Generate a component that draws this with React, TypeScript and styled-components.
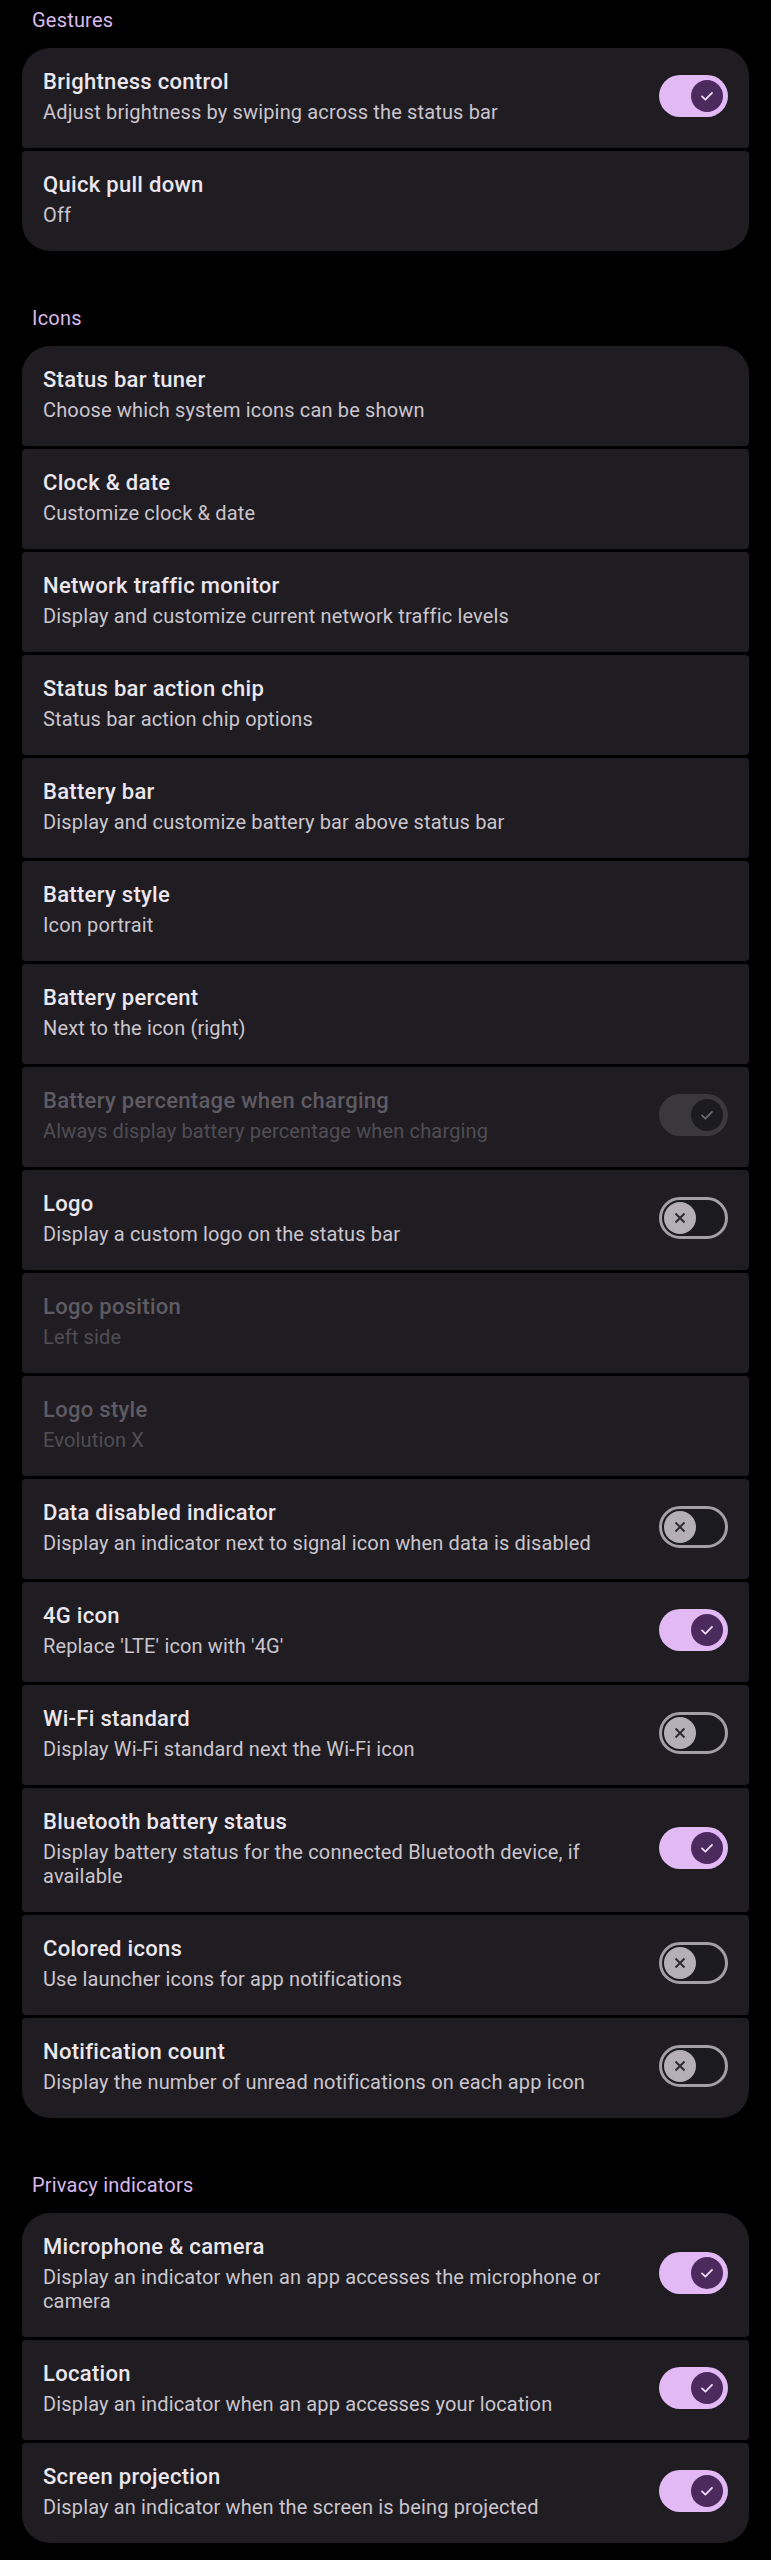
import React from "react";
import styled, { createGlobalStyle } from "styled-components";

type Toggle = "on" | "off" | "disabled" | undefined;

type Pref = {
    title: string;
    summary: string;
    toggle?: Toggle;
    disabled?: boolean;
};

type Section = {
    header: string;
    items: Pref[];
};

const sections: Section[] = [
    {
        header: "Gestures",
        items: [
            { title: "Brightness control", summary: "Adjust brightness by swiping across the status bar", toggle: "on" },
            { title: "Quick pull down", summary: "Off" },
        ],
    },
    {
        header: "Icons",
        items: [
            { title: "Status bar tuner", summary: "Choose which system icons can be shown" },
            { title: "Clock & date", summary: "Customize clock & date" },
            { title: "Network traffic monitor", summary: "Display and customize current network traffic levels" },
            { title: "Status bar action chip", summary: "Status bar action chip options" },
            { title: "Battery bar", summary: "Display and customize battery bar above status bar" },
            { title: "Battery style", summary: "Icon portrait" },
            { title: "Battery percent", summary: "Next to the icon (right)" },
            {
                title: "Battery percentage when charging",
                summary: "Always display battery percentage when charging",
                toggle: "disabled",
                disabled: true,
            },
            { title: "Logo", summary: "Display a custom logo on the status bar", toggle: "off" },
            { title: "Logo position", summary: "Left side", disabled: true },
            { title: "Logo style", summary: "Evolution X", disabled: true },
            {
                title: "Data disabled indicator",
                summary: "Display an indicator next to signal icon when data is disabled",
                toggle: "off",
            },
            { title: "4G icon", summary: "Replace 'LTE' icon with '4G'", toggle: "on" },
            { title: "Wi-Fi standard", summary: "Display Wi-Fi standard next the Wi-Fi icon", toggle: "off" },
            {
                title: "Bluetooth battery status",
                summary: "Display battery status for the connected Bluetooth device, if available",
                toggle: "on",
            },
            { title: "Colored icons", summary: "Use launcher icons for app notifications", toggle: "off" },
            {
                title: "Notification count",
                summary: "Display the number of unread notifications on each app icon",
                toggle: "off",
            },
        ],
    },
    {
        header: "Privacy indicators",
        items: [
            {
                title: "Microphone & camera",
                summary: "Display an indicator when an app accesses the microphone or camera",
                toggle: "on",
            },
            { title: "Location", summary: "Display an indicator when an app accesses your location", toggle: "on" },
            {
                title: "Screen projection",
                summary: "Display an indicator when the screen is being projected",
                toggle: "on",
            },
        ],
    },
];

function Switch({ state }: { state: Toggle }) {
    if (state === "off") {
        return (
            <Track $state="off">
                <Thumb $state="off">
                    <svg width="16" height="16" viewBox="0 0 16 16">
                        <path d="M3.5 3.5 L12.5 12.5 M12.5 3.5 L3.5 12.5" stroke="#29262c" strokeWidth="1.8" fill="none" />
                    </svg>
                </Thumb>
            </Track>
        );
    }
    return (
        <Track $state={state}>
            <Thumb $state={state}>
                <svg width="16" height="16" viewBox="0 0 16 16">
                    <path
                        d="M3 8.4 L6.4 11.6 L13 4.8"
                        stroke={state === "disabled" ? "#6c6870" : "#efdcf7"}
                        strokeWidth="1.8"
                        fill="none"
                        strokeLinecap="round"
                        strokeLinejoin="round"
                    />
                </svg>
            </Thumb>
        </Track>
    );
}

export default function App() {
    return (
        <Page>
            <GlobalStyle />
            {sections.map((section) => (
                <SectionBlock key={section.header}>
                    <Header>{section.header}</Header>
                    <Group>
                        {section.items.map((item) => (
                            <Row key={item.title}>
                                <Texts>
                                    <Title $disabled={item.disabled}>{item.title}</Title>
                                    <Summary $disabled={item.disabled}>{item.summary}</Summary>
                                </Texts>
                                {item.toggle && <Switch state={item.toggle} />}
                            </Row>
                        ))}
                    </Group>
                </SectionBlock>
            ))}
        </Page>
    );
}

const GlobalStyle = createGlobalStyle`
    html, body {
        margin: 0;
        padding: 0;
        background: #000;
    }
    * {
        box-sizing: border-box;
    }
`;

const Page = styled.div`
    width: 771px;
    min-height: 2560px;
    background: #000;
    padding: 8px 22px 20px;
    display: flex;
    flex-direction: column;
    gap: 55px;
    font-family: Roboto, "Noto Sans", sans-serif;
`;

const SectionBlock = styled.section`
    display: flex;
    flex-direction: column;
    gap: 16px;
`;

const Header = styled.div`
    padding-left: 10px;
    height: 24px;
    line-height: 24px;
    font-size: 20px;
    letter-spacing: 0.2px;
    color: #d9baee;
`;

const Group = styled.div`
    display: flex;
    flex-direction: column;
    gap: 3px;
`;

const Row = styled.div`
    display: flex;
    align-items: center;
    gap: 16px;
    min-height: 100px;
    padding: 20px 21px 24px;
    background: #1f1d22;
    border-radius: 4px;

    &:first-child {
        border-top-left-radius: 28px;
        border-top-right-radius: 28px;
    }
    &:last-child {
        border-bottom-left-radius: 28px;
        border-bottom-right-radius: 28px;
    }
`;

const Texts = styled.div`
    flex: 1;
    display: flex;
    flex-direction: column;
    gap: 4px;
`;

const Title = styled.div<{ $disabled?: boolean }>`
    font-size: 22px;
    line-height: 28px;
    font-weight: 500;
    letter-spacing: 0.3px;
    color: ${({ $disabled }) => ($disabled ? "#5e5b62" : "#ece6ee")};
`;

const Summary = styled.div<{ $disabled?: boolean }>`
    font-size: 20px;
    line-height: 24px;
    letter-spacing: 0.15px;
    color: ${({ $disabled }) => ($disabled ? "#504d54" : "#cbc5cd")};
`;

const Track = styled.div<{ $state: Toggle }>`
    flex: none;
    width: 69px;
    height: 42px;
    border-radius: 21px;
    display: flex;
    align-items: center;
    justify-content: ${({ $state }) => ($state === "off" ? "flex-start" : "flex-end")};
    background: ${({ $state }) =>
        $state === "on" ? "#e2b8f5" : $state === "disabled" ? "#3a383d" : "#1b1a1e"};
    border: ${({ $state }) => ($state === "off" ? "3px solid #a49fa7" : "none")};
    padding: ${({ $state }) => ($state === "off" ? "0 2px" : "0 5px")};
`;

const Thumb = styled.div<{ $state: Toggle }>`
    width: 32px;
    height: 32px;
    border-radius: 50%;
    display: flex;
    align-items: center;
    justify-content: center;
    background: ${({ $state }) =>
        $state === "on" ? "#4d2a5d" : $state === "disabled" ? "#1c1b1f" : "#b4aeb7"};
`;
